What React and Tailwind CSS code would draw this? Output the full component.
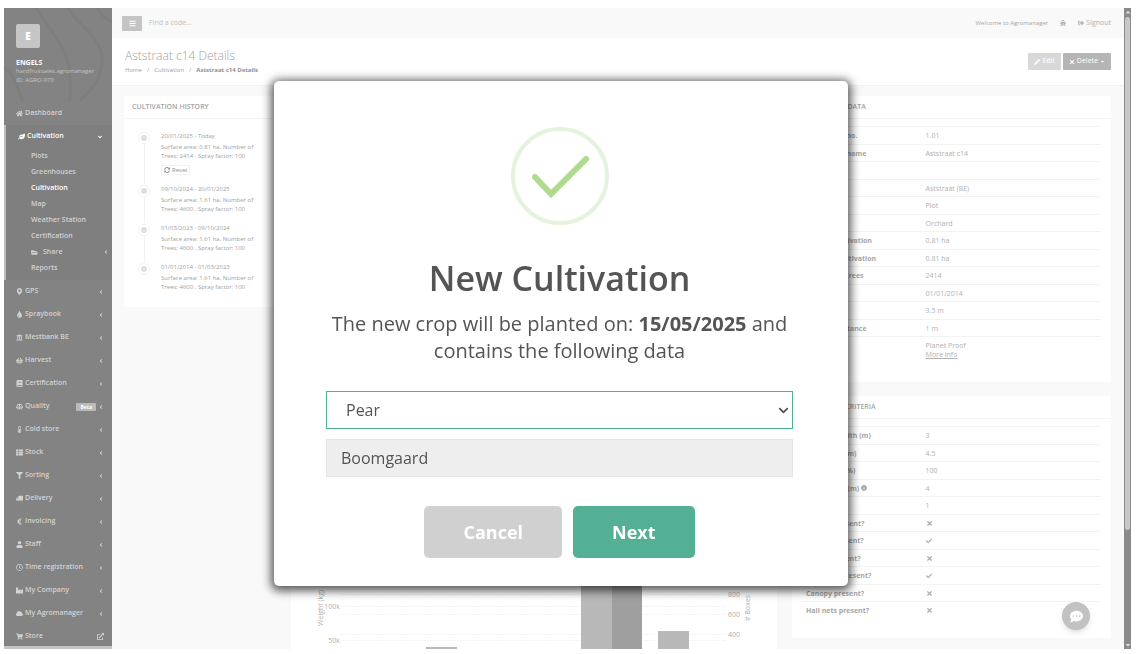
// src/pages/CultivationDetails.jsx
import React, { useState } from "react";
import {
  FaBalanceScale,
  FaBars,
  FaBook,
  FaBug,
  FaCaretDown,
  FaCaretUp,
  FaCheck,
  FaChevronDown,
  FaAngleDown,
  FaAngleLeft,
  FaCloud,
  FaCommentDots,
  FaEuroSign,
  FaExternalLinkAlt,
  FaFilter,
  FaFolderOpen,
  FaHome,
  FaIndustry,
  FaInfoCircle,
  FaLeaf,
  FaMapMarkerAlt,
  FaPencilAlt,
  FaRegClock,
  FaShoppingBasket,
  FaShoppingCart,
  FaSignOutAlt,
  FaSyncAlt,
  FaThList,
  FaThermometerHalf,
  FaTimes,
  FaTint,
  FaTruck,
  FaUniversity,
  FaUser,
} from "react-icons/fa";

const subItems = [
  { label: "Plots" },
  { label: "Greenhouses" },
  { label: "Cultivation", active: true },
  { label: "Map" },
  { label: "Weather Station" },
  { label: "Certification" },
  { label: "Share", icon: FaFolderOpen },
  { label: "Reports" },
];

const menuItems = [
  { label: "GPS", icon: FaMapMarkerAlt },
  { label: "Spraybook", icon: FaTint },
  { label: "Mestbank BE", icon: FaUniversity },
  { label: "Harvest", icon: FaShoppingBasket },
  { label: "Certification", icon: FaBook },
  { label: "Quality", icon: FaBalanceScale, badge: "Beta" },
  { label: "Cold store", icon: FaThermometerHalf },
  { label: "Stock", icon: FaThList },
  { label: "Sorting", icon: FaFilter },
  { label: "Delivery", icon: FaTruck, flip: true },
  { label: "Invoicing", icon: FaEuroSign },
  { label: "Staff", icon: FaUser },
  { label: "Time registration", icon: FaRegClock },
  { label: "My Company", icon: FaIndustry },
  { label: "My Agromanager", icon: FaCloud },
  { label: "Store", icon: FaShoppingCart, external: true },
];

const history = [
  { period: "20/01/2025 - Today", area: "0.81", trees: 2414, reset: true },
  { period: "09/10/2024 - 20/01/2025", area: "1.61", trees: 4600 },
  { period: "01/03/2023 - 09/10/2024", area: "1.61", trees: 4600 },
  { period: "01/01/2014 - 01/03/2023", area: "1.61", trees: 4600 },
];

const yes = <FaCheck size={6} />;
const no = <FaTimes size={7} />;

const cultivationData = [
  ["Cultivation no.", "1.01"],
  ["Cultivation name", "Aststraat c14"],
  ["Code", ""],
  ["Plot", "Aststraat (BE)"],
  ["Type", "Plot"],
  ["Crop", "Orchard"],
  ["Surface cultivation", "0.81 ha"],
  ["Net area cultivation", "0.81 ha"],
  ["Number of trees", "2414"],
  ["Planted", "01/01/2014"],
  ["Row", "3.5 m"],
  ["Planting distance", "1 m"],
];

const criteria = [
  ["Working width (m)", "3"],
  ["Row width (m)", "4.5"],
  ["Tree cover (%)", "100"],
  ["Tree height (m)", "4", true],
  ["Rows", "1"],
  ["Ditches present?", no],
  ["Hedges present?", yes],
  ["Slopes present?", no],
  ["Irrigation present?", yes],
  ["Canopy present?", no],
  ["Hail nets present?", no],
];

function Sidebar() {
  return (
    <aside className="relative flex w-[108px] shrink-0 flex-col overflow-hidden bg-[#838383] text-[7px] font-semibold text-[#d2d2d2]">
      <svg className="absolute top-0 left-0" width="108" height="93" fill="none" stroke="#7e7e7e" strokeWidth="3">
        <path d="M30 -4C40 16 66 40 66 68c0 10 2 16-1 26" />
        <path d="M62 -4c10 22 34 30 36 54 1 16-6 28-22 42" />
        <path d="M-3 58c14 8 16 20 22 36" />
        <path d="M92 -4c2 10 10 14 20 20" />
      </svg>

      {/* ===== Profile ===== */}
      <div className="relative h-[94px] shrink-0 px-3 pt-4">
        <div className="flex size-6 items-center justify-center rounded-xs bg-[#c6c6c6] text-[10px] font-extrabold text-white">
          E
        </div>
        <div className="mt-[10px] text-[6px] leading-[9px] font-normal text-[#c4c4c4]">
          <p className="text-[7px] font-bold text-white">ENGELS</p>
          <p>hardfruitsales.agromanager</p>
          <p>ID: AGRO-970</p>
        </div>
      </div>

      <nav className="relative grow">
        <a href="#dashboard" className="flex h-[23px] items-center gap-[2px] px-3">
          <FaHome size={7} />
          Dashboard
        </a>

        <div className="border-l-2 border-[#bdbdbd] bg-[#7f7f7f] pb-1">
          <a href="#cultivation" className="flex h-[23px] items-center gap-[2px] pr-[9px] pl-3 text-white">
            <FaLeaf size={7} />
            <span className="grow">Cultivation</span>
            <FaAngleDown size={6} />
          </a>
          {subItems.map(({ label, icon: Icon, active }) => (
            <a
              key={label}
              href="#sub"
              className={`flex h-4 items-center gap-[5px] pr-[3px] pl-[25px] ${active ? "text-white" : ""}`}
            >
              {Icon && <Icon size={7} />}
              <span className="grow">{label}</span>
              {Icon && <FaAngleLeft size={6} />}
            </a>
          ))}
        </div>

        {menuItems.map(({ label, icon: Icon, badge, flip, external }) => (
          <a key={label} href="#menu" className="flex h-[23px] items-center gap-[2px] pr-2 pl-3">
            <Icon size={7} className={flip ? "-scale-x-100" : ""} />
            <span className="grow">{label}</span>
            {badge && (
              <span className="rounded-[1px] bg-[#bababa] px-1 text-[5px] leading-[8px] font-bold text-white">
                {badge}
              </span>
            )}
            {external ? <FaExternalLinkAlt size={7} /> : <FaAngleLeft size={6} />}
          </a>
        ))}
      </nav>
      <div className="absolute inset-x-0 bottom-0 h-[3px] bg-[#c4c4c4]" />
    </aside>
  );
}

function Card({ title, className = "", children }) {
  return (
    <section className={`bg-white ${className}`}>
      <h2 className="flex h-[23px] items-center border-b border-[#f3f3f3] px-2 text-[7px] font-semibold text-[#a3a3a3]">
        {title}
      </h2>
      {children}
    </section>
  );
}

function DataTable({ rows, children }) {
  return (
    <table className="w-full text-left text-[7px] leading-[9px]">
      <tbody>
        {rows.map(([label, value, info], i) => (
          <tr
            key={label}
            className={`border-t border-[#f3f3f3] ${i % 2 ? "h-[17px]" : "h-[18px]"}`}
          >
            <th className="w-2/5 pl-1 font-bold text-[#a6a6a6]">
              <span className="flex items-center gap-[2px]">
                {label}
                {info && <FaInfoCircle size={6} />}
              </span>
            </th>
            <td className="pl-1">{value}</td>
          </tr>
        ))}
        {children}
      </tbody>
    </table>
  );
}

function HarvestChart() {
  return (
    <svg viewBox="0 0 486 531" className="w-full" fontSize="7" fill="#b0b0b0">
      <g stroke="#f3f3f3" strokeDasharray="2 1">
        <path d="M49 487.5H436M49 521.5H436M49 475.5H436M49 495.5H436M49 515.5H436" />
      </g>
      <g textAnchor="end">
        <text x="49" y="490">100k</text>
        <text x="49" y="524">50k</text>
      </g>
      <text x="437" y="478">800</text>
      <text x="437" y="498">600</text>
      <text x="437" y="518">400</text>
      <text transform="translate(32 507) rotate(-90)">Weight (kg)</text>
      <text transform="translate(459 502) rotate(-90)"># Boxes</text>
      <g fill="#b8b8b8">
        <rect x="135" y="528" width="31" height="4" />
        <rect x="290" y="400" width="31" height="131" />
        <rect x="367" y="512" width="31" height="20" />
      </g>
      <rect x="321" y="400" width="30" height="131" fill="#9f9f9f" />
    </svg>
  );
}

function NewCultivationModal() {
  const [crop, setCrop] = useState("Pear");

  return (
    <div className="fixed inset-0 z-50 flex items-center justify-center pt-[13px] pr-4">
      <div
        role="dialog"
        aria-labelledby="modal-title"
        className="w-[574px] rounded-[5px] bg-white pt-[45px] pr-[55px] pb-7 pl-[52px] text-center text-[#545454] shadow-[0_2px_10px_3px_rgba(0,0,0,0.65)]"
      >
        {/* ===== Success icon ===== */}
        <svg className="mx-auto" width="100" height="100" viewBox="0 0 100 100" fill="none">
          <circle cx="50" cy="50" r="47" stroke="#e5f3dc" strokeWidth="4" />
          <path d="M25 51L41 68L76 33" stroke="#b0db8f" strokeWidth="6" strokeLinecap="round" />
        </svg>

        <h1 id="modal-title" className="mt-7 text-[34px] leading-[48px] font-semibold">
          New Cultivation
        </h1>
        <p className="mt-2 text-[20px] leading-[27px]">
          The new crop will be planted on: <b>15/05/2025</b> and
          <br />
          contains the following data
        </p>

        <form className="mt-[27px] flex flex-col gap-[10px] text-[16px]">
          <div className="relative">
            <select
              aria-label="Crop"
              value={crop}
              onChange={(e) => setCrop(e.target.value)}
              className="h-[38px] w-full appearance-none border border-[#54b095] bg-white px-[19px] outline-none"
            >
              <option>Pear</option>
              <option>Apple</option>
            </select>
            <FaChevronDown size={11} className="pointer-events-none absolute top-[14px] right-1" />
          </div>
          <input
            aria-label="Type"
            readOnly
            defaultValue="Boomgaard"
            className="h-[38px] w-full border border-[#e5e5e5] bg-[#eee] px-[14px] outline-none"
          />
        </form>

        <div className="mt-[29px] flex justify-center gap-[11px] text-[18px] font-bold text-white">
          <button type="button" className="h-[52px] rounded-[5px] bg-[#d0d0d0] px-[39px]">
            Cancel
          </button>
          <button type="button" className="h-[52px] rounded-[5px] bg-[#54b095] px-[39px]">
            Next
          </button>
        </div>
      </div>
    </div>
  );
}

export default function App() {
  return (
    <div className="h-screen overflow-hidden bg-white pt-2 pr-[7px] pb-[5px] pl-1 font-['Open_Sans',sans-serif] text-[7px] text-[#b0b0b0]">
      <div className="flex h-full overflow-hidden">
        <Sidebar />

        <div className="min-w-0 grow overflow-hidden bg-[#f9f9f9]">
          {/* ===== Top bar ===== */}
          <header className="flex h-[30px] items-center px-[10px]">
            <button
              type="button"
              aria-label="Menu"
              className="flex h-[15px] w-5 items-center justify-center rounded-[1px] bg-[#c4c4c4] text-white"
            >
              <FaBars size={7} />
            </button>
            <input
              aria-label="Find a code"
              placeholder="Find a code..."
              className="ml-[7px] grow bg-transparent outline-none placeholder:text-[#c0c0c0]"
            />
            <span className="text-[6px] text-[#a6a6a6]">Welcome to Agromanager</span>
            <FaBug size={6} className="mx-3" />
            <a href="#signout" className="flex items-center gap-[2px] pr-[3px]">
              <FaSignOutAlt size={6} />
              Signout
            </a>
          </header>

          {/* ===== Page heading ===== */}
          <div className="flex h-[48px] items-center justify-between border-b border-[#f2f2f2] bg-white px-[13px]">
            <div>
              <h1 className="text-[12px] leading-4 font-light text-[#a0a0a0]">Aststraat c14 Details</h1>
              <nav className="mt-[2px] mb-px flex gap-[5px] text-[6px] leading-[9px] text-[#a0a0a0]">
                <a href="#home">Home</a>
                <span>/</span>
                <a href="#list">Cultivation</a>
                <span>/</span>
                <strong className="text-[#909090]">Aststraat c14 Details</strong>
              </nav>
            </div>
            <div className="flex gap-[2px] text-white">
              <button type="button" className="flex h-[17px] items-center gap-[2px] rounded-[1px] bg-[#d8d8d8] px-[6px]">
                <FaPencilAlt size={6} />
                Edit
              </button>
              <button type="button" className="flex h-[17px] items-center gap-[2px] rounded-[1px] bg-[#b5b5b5] px-[6px]">
                <FaTimes size={6} />
                Delete
                <FaCaretDown size={5} />
              </button>
            </div>
          </div>

          <main className="grid grid-cols-12 items-start gap-[15px] py-[10px] pr-[13px] pl-3">
            <Card title="CULTIVATION HISTORY" className="col-span-2 pb-[15px]">
              <ol className="pt-3 pl-[14px]">
                {history.map((item, i) => (
                  <li key={item.period} className="flex gap-[11px]">
                    <div className="flex w-3 flex-col items-center pt-px">
                      <span className="flex size-3 shrink-0 items-center justify-center rounded-full border border-[#f3f3f3]">
                        <span className="size-[6px] rounded-full bg-[#e0e0e0]" />
                      </span>
                      {i < history.length - 1 && <span className="w-px grow bg-[#f0f0f0]" />}
                    </div>
                    <div
                      className={`w-[106px] text-[6px] leading-[9px] text-[#a0a0a0] ${i < history.length - 1 ? "pb-[9px]" : ""}`}
                    >
                      <p className="leading-[10px]">{item.period}</p>
                      <p className="mt-[2px]">
                        {`Surface area: ${item.area} ha, Number of`}
                        <br />
                        {`Trees: ${item.trees} , Spray factor: 100`}
                      </p>
                      {item.reset && (
                        <button
                          type="button"
                          className="mt-1 flex h-[10px] items-center gap-[2px] border border-[#f2f2f2] px-[2px] text-[#909090]"
                        >
                          <FaSyncAlt size={6} />
                          Reset
                        </button>
                      )}
                    </div>
                  </li>
                ))}
              </ol>
            </Card>

            <Card title="HARVEST" className="col-span-6">
              <HarvestChart />
            </Card>

            <div className="col-span-4 space-y-[14px]">
              <Card title="CULTIVATION DATA" className="pb-[19px]">
                <div className="px-[10px] pt-[7px]">
                  <DataTable rows={cultivationData}>
                    <tr className="border-t border-[#f3f3f3]">
                      <th className="pt-1 pl-1 align-top font-bold text-[#a6a6a6]">Label</th>
                      <td className="pt-1 pb-1 pl-1">
                        Planet Proof
                        <br />
                        <a href="#info" className="underline">
                          More info
                        </a>
                      </td>
                    </tr>
                  </DataTable>
                </div>
              </Card>
              <Card title="EVALUATION CRITERIA" className="pb-[18px]">
                <div className="px-[10px] pt-[7px]">
                  <DataTable rows={criteria} />
                </div>
              </Card>
            </div>
          </main>
        </div>

        {/* ===== Scrollbar ===== */}
        <div className="flex w-[7px] shrink-0 flex-col items-center bg-[#8a8a8a] text-[#d8d8d8]">
          <FaCaretUp size={8} className="shrink-0" />
          <div className="mt-px h-4/5 w-[5px] rounded-full bg-[#c8c8c8]" />
          <FaCaretDown size={8} className="mt-auto shrink-0" />
        </div>
      </div>

      <button
        type="button"
        aria-label="Chat"
        className="fixed right-12 bottom-6 flex size-7 items-center justify-center rounded-full bg-[#c2c2c2] text-white shadow-md"
      >
        <FaCommentDots size={13} />
      </button>

      <NewCultivationModal />
    </div>
  );
}
